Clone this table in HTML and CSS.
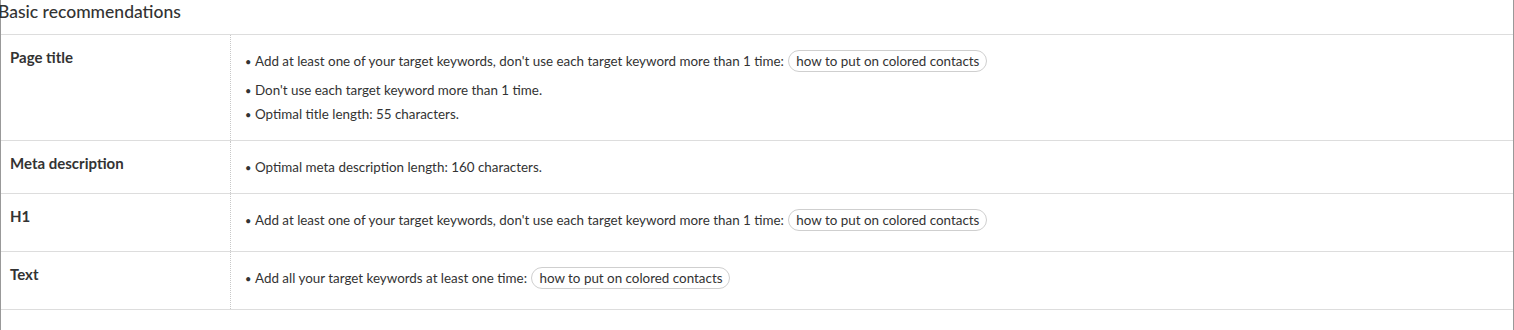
FILE: index.html
```html
<!DOCTYPE html>
<html>
<head>
<meta charset="utf-8">
<link rel="stylesheet" href="styles.css">
</head>
<body>
<div class="panel">
  <div class="panel-head"><h2 class="panel-title">Basic recommendations</h2></div>
  <div class="rec-row">
    <div class="rec-label">Page title</div>
    <ul class="rec-list">
      <li class="rec-item has-tag">Add at least one of your target keywords, don't use each target keyword more than 1 time: <span class="tag">how to put on colored contacts</span></li>
      <li class="rec-item">Don't use each target keyword more than 1 time.</li>
      <li class="rec-item">Optimal title length: 55 characters.</li>
    </ul>
  </div>
  <div class="rec-row">
    <div class="rec-label">Meta description</div>
    <ul class="rec-list">
      <li class="rec-item">Optimal meta description length: 160 characters.</li>
    </ul>
  </div>
  <div class="rec-row">
    <div class="rec-label">H1</div>
    <ul class="rec-list">
      <li class="rec-item has-tag">Add at least one of your target keywords, don't use each target keyword more than 1 time: <span class="tag">how to put on colored contacts</span></li>
    </ul>
  </div>
  <div class="rec-row">
    <div class="rec-label">Text</div>
    <ul class="rec-list">
      <li class="rec-item has-tag">Add all your target keywords at least one time: <span class="tag">how to put on colored contacts</span></li>
    </ul>
  </div>
</div>
</body>
</html>
```
FILE: styles.css
```css
html, body {
  margin: 0;
  padding: 0;
  background: #fff;
  height: 100%;
}
body {
  font-family: Lato, "Liberation Sans", sans-serif;
  color: #333;
  overflow: hidden;
}
.panel {
  box-sizing: border-box;
  width: 1514px;
  height: 330px;
  border-left: 1px solid #999;
  border-right: 1px solid #999;
}
.panel-head {
  height: 35px;
  border-bottom: 1px solid #ddd;
  box-sizing: border-box;
  display: flex;
  align-items: center;
}
.panel-title {
  margin: 0 0 0 -3px;
  font-size: 17.5px;
  font-weight: 500;
  line-height: 20px;
  padding-bottom: 10px;
  color: #333;
}
.rec-row {
  display: grid;
  grid-template-columns: 230px 1fr;
  border-bottom: 1px solid #ddd;
}
.rec-label {
  border-right: 1px dotted #c8c8c8;
  padding: 13px 0 0 9px;
  font-size: 15px;
  font-weight: 700;
  line-height: 18px;
  color: #333;
}
.rec-list {
  list-style: none;
  margin: 0;
  padding: 14px 0 14px 14px;
}
.rec-item {
  display: flex;
  align-items: center;
  height: 24px;
  font-size: 13.4px;
  white-space: pre;
}
.rec-item::before {
  content: "•";
  display: inline-block;
  width: 10px;
  font-size: 11px;
}
.rec-item.has-tag {
  margin-bottom: 5px;
}
.tag {
  display: inline-block;
  box-sizing: border-box;
  height: 22px;
  line-height: 20px;
  padding: 0 7px;
  margin-left: 1px;
  border: 1px solid #cfcfcf;
  border-radius: 11px;
}
```
